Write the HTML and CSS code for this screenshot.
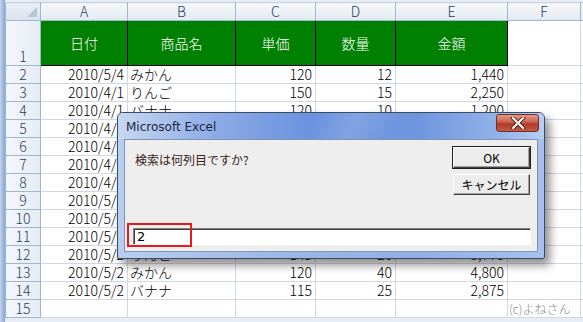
FILE: index.html
```html
<!DOCTYPE html>
<html lang="ja">
  <head>
    <meta charset="UTF-8" />
    <title>Microsoft Excel - InputBox</title>
    <link rel="stylesheet" href="styles.css">
  </head>
  <body>
    <div class="window">
      <div class="frame-left"></div>
      <div class="sheet">
        <table class="grid">
          <colgroup>
            <col class="c-head">
            <col class="c-a">
            <col class="c-b">
            <col class="c-c">
            <col class="c-d">
            <col class="c-e">
            <col class="c-f">
            <col>
          </colgroup>
          <thead>
            <tr class="col-heads">
              <th class="corner"><span class="tri"></span></th>
              <th>A</th><th>B</th><th>C</th><th>D</th><th>E</th><th>F</th><th></th>
            </tr>
          </thead>
          <tbody>
            <tr class="title-row">
              <th class="rh">1</th>
              <td class="hd">日付</td>
              <td class="hd">商品名</td>
              <td class="hd">単価</td>
              <td class="hd">数量</td>
              <td class="hd">金額</td>
              <td></td><td></td>
            </tr>
            <tr><th class="rh">2</th><td class="num">2010/5/4</td><td>みかん</td><td class="num">120</td><td class="num">12</td><td class="num">1,440</td><td></td><td></td></tr>
            <tr><th class="rh">3</th><td class="num">2010/4/1</td><td>りんご</td><td class="num">150</td><td class="num">15</td><td class="num">2,250</td><td></td><td></td></tr>
            <tr><th class="rh">4</th><td class="num">2010/4/1</td><td>バナナ</td><td class="num">120</td><td class="num">10</td><td class="num">1,200</td><td></td><td></td></tr>
            <tr><th class="rh">5</th><td class="num">2010/4/1</td><td>みかん</td><td class="num">120</td><td class="num">30</td><td class="num">3,600</td><td></td><td></td></tr>
            <tr><th class="rh">6</th><td class="num">2010/4/1</td><td>りんご</td><td class="num">150</td><td class="num">20</td><td class="num">3,000</td><td></td><td></td></tr>
            <tr><th class="rh">7</th><td class="num">2010/4/1</td><td>バナナ</td><td class="num">115</td><td class="num">15</td><td class="num">1,725</td><td></td><td></td></tr>
            <tr><th class="rh">8</th><td class="num">2010/4/1</td><td>みかん</td><td class="num">120</td><td class="num">25</td><td class="num">3,000</td><td></td><td></td></tr>
            <tr><th class="rh">9</th><td class="num">2010/5/1</td><td>りんご</td><td class="num">150</td><td class="num">10</td><td class="num">1,500</td><td></td><td></td></tr>
            <tr><th class="rh">10</th><td class="num">2010/5/1</td><td>バナナ</td><td class="num">115</td><td class="num">20</td><td class="num">2,300</td><td></td><td></td></tr>
            <tr><th class="rh">11</th><td class="num">2010/5/1</td><td>みかん</td><td class="num">120</td><td class="num">35</td><td class="num">4,200</td><td></td><td></td></tr>
            <tr><th class="rh">12</th><td class="num">2010/5/2</td><td>りんご</td><td class="num">145</td><td class="num">26</td><td class="num">3,770</td><td></td><td></td></tr>
            <tr><th class="rh">13</th><td class="num">2010/5/2</td><td>みかん</td><td class="num">120</td><td class="num">40</td><td class="num">4,800</td><td></td><td></td></tr>
            <tr><th class="rh">14</th><td class="num">2010/5/2</td><td>バナナ</td><td class="num">115</td><td class="num">25</td><td class="num">2,875</td><td></td><td></td></tr>
            <tr><th class="rh">15</th><td></td><td></td><td></td><td></td><td></td><td class="credit">(c)よねさん</td><td></td></tr>
          </tbody>
        </table>
      </div>
    </div>

    <!-- InputBox dialog over the sheet -->
    <div class="dialog">
      <div class="titlebar">
        <span class="title">Microsoft Excel</span>
        <button class="close" type="button">
          <svg width="18" height="12" viewBox="0 0 18 12">
            <path d="M4 1 L14 11 M14 1 L4 11" stroke="#5a2a22" stroke-width="4" stroke-linecap="square" />
            <path d="M4 1 L14 11 M14 1 L4 11" stroke="#ffffff" stroke-width="2" stroke-linecap="square" />
          </svg>
        </button>
      </div>
      <div class="client">
        <div class="top">
          <div class="prompt">検索は何列目ですか?</div>
          <div class="buttons">
            <button class="btn btn-default" type="button">OK</button>
            <button class="btn" type="button">キャンセル</button>
          </div>
        </div>
        <div class="field">
          <input class="answer" type="text" value="2">
          <span class="mark"></span>
        </div>
      </div>
    </div>
  </body>
</html>
```

FILE: styles.css
```css
body {
  margin: 0;
  width: 583px;
  height: 322px;
  overflow: hidden;
  background: #fff;
  font-family: "Noto Sans CJK JP", "Noto Sans", sans-serif;
  color: #000;
  position: relative;
}
.window {
  display: flex;
  height: 322px;
}
.frame-left {
  width: 5px;
  flex: none;
  background: linear-gradient(90deg, #c4d4ec, #9fb8df 60%, #8aa6d6);
}
.sheet {
  flex: 1;
  padding-top: 2px;
  background: #e8edf5;
  overflow: hidden;
}
.grid {
  border-collapse: collapse;
  table-layout: fixed;
  width: 600px;
  background: #fff;
  font-size: 14px;
  font-weight: 300;
}
.c-head { width: 35px; }
.c-a { width: 87px; }
.c-b { width: 108px; }
.c-c { width: 80px; }
.c-d { width: 80px; }
.c-e { width: 112px; }
.c-f { width: 73px; }

.grid td,
.grid th {
  height: 17px;
  padding: 0 2px;
  border: 1px solid #d0d7e5;
  white-space: nowrap;
  overflow: hidden;
  line-height: 17px;
}
.col-heads th {
  font-weight: 300;
  font-size: 14px;
  color: #27415f;
  background: linear-gradient(#f6f8fb, #e3e9f2);
  border: 1px solid #9eb6ce;
  border-top-color: #c5d2e2;
}
.corner {
  position: relative;
  background: linear-gradient(#e9eef6, #dbe3ef) !important;
}
.tri {
  position: absolute;
  right: 3px;
  bottom: 3px;
  border-style: solid;
  border-width: 0 0 10px 10px;
  border-color: transparent transparent #b9c6d6 transparent;
}
.rh {
  font-weight: 300;
  font-size: 14px;
  color: #27415f;
  text-align: center;
  background: linear-gradient(90deg, #f4f6fa, #e6ecf5);
  border: 1px solid #9eb6ce !important;
}
.title-row td,
.title-row th {
  height: 44px;
  vertical-align: middle;
}
.title-row .rh {
  vertical-align: bottom;
}
.hd {
  background: #008000;
  color: #fff;
  text-align: center;
  border: 1px solid #000 !important;
}
.title-row .hd:first-of-type {
  border-left-color: #d0d7e5 !important;
}
.num {
  text-align: right;
  padding-right: 3px !important;
}
.credit {
  font-size: 12px;
  color: #8a8a8a;
  padding-left: 1px !important;
}

/* dialog */
.dialog {
  position: absolute;
  left: 117px;
  top: 112px;
  width: 414px;
  height: 139px;
  border: 1px solid #3c4a60;
  border-radius: 6px 6px 2px 2px;
  background: linear-gradient(90deg, #b9cdef, #9cb7e6 40%, #8fb0e6 70%, #a6c1ee);
  box-shadow: 5px 6px 10px rgba(0, 0, 0, 0.45);
  display: flex;
  flex-direction: column;
  padding: 0 6px 6px;
}
.titlebar {
  height: 26px;
  flex: none;
  display: flex;
  align-items: center;
  justify-content: space-between;
  margin: 0 -6px;
  padding: 0 5px 0 8px;
  border-radius: 5px 5px 0 0;
  background:
    linear-gradient(115deg, rgba(255,255,255,0) 45%, rgba(255,255,255,0.15) 55%, rgba(255,255,255,0) 65%),
    linear-gradient(90deg, #c7d7f1 0%, #8eace6 22%, #6a92de 45%, #6e95de 70%, #8fb0e8 88%, #b8cdf2 100%);
}
.title {
  font-family: "DejaVu Sans", sans-serif;
  font-size: 12px;
  color: #1b2740;
  margin-top: 1px;
}
.close {
  width: 43px;
  height: 18px;
  margin-top: -7px;
  padding: 0;
  border: 1px solid #6b3328;
  border-radius: 3px;
  background: linear-gradient(#e29a8a, #c8604c 45%, #b03a28 55%, #c45a44);
  display: flex;
  align-items: center;
  justify-content: center;
}
.client {
  flex: 1;
  background: #eeeeee;
  border: 1px solid #7f93b4;
  padding: 7px 8px 6px;
  display: flex;
  flex-direction: column;
  justify-content: space-between;
}
.top {
  display: flex;
  justify-content: space-between;
}
.prompt {
  font-size: 12px;
  color: #3a2218;
  padding: 4px 0 0 2px;
}
.buttons {
  display: flex;
  flex-direction: column;
  gap: 6px;
  margin-right: -1px;
}
.btn {
  width: 77px;
  height: 21px;
  padding: 0;
  font-family: "Noto Sans CJK JP", sans-serif;
  font-size: 12px;
  color: #000;
  background: #ececec;
  border: 1px solid;
  border-color: #fff #404040 #404040 #fff;
  box-shadow: inset -1px -1px 0 #a0a0a0;
}
.btn-default {
  outline: 1px solid #202020;
}
.field {
  position: relative;
}
.answer {
  display: block;
  width: 398px;
  height: 17px;
  box-sizing: border-box;
  margin: 0;
  padding: 0 3px;
  font-family: "DejaVu Sans", sans-serif;
  font-size: 13px;
  background: #fff;
  border: 1px solid;
  border-color: #808080 #fff #fff #808080;
  box-shadow: inset 1px 1px 0 #404040;
}
.mark {
  position: absolute;
  left: -6px;
  top: -5px;
  width: 61px;
  height: 20px;
  border: 2px solid #e81a1a;
}
```
